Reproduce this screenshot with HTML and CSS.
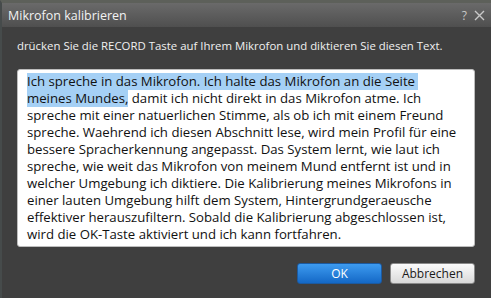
FILE: index.html
```html
<!DOCTYPE html>
<html lang="de">

<head>
    <meta charset="UTF-8" />
    <meta name="viewport" content="width=device-width, initial-scale=1.0" />
    <title>Mikrofon kalibrieren</title>
    <link rel="stylesheet" href="styles.css">
</head>

<body>
    <div class="window">
        <header class="titlebar">
            <span class="title">Mikrofon kalibrieren</span>
            <div class="title-controls">
                <span class="help">?</span>
                <svg class="close" width="11" height="11" viewBox="0 0 11 11">
                    <path d="M1 1 L10 10 M10 1 L1 10" stroke="#c8c8c8" stroke-width="1.4" fill="none" />
                </svg>
            </div>
        </header>
        <main class="content">
            <p class="prompt">drücken Sie die RECORD Taste auf Ihrem Mikrofon und diktieren Sie diesen Text.</p>
            <div class="textbox">
                <span class="line"><span class="selected">Ich spreche in das Mikrofon. Ich halte das Mikrofon an die Seite&nbsp;</span></span>
                <span class="line"><span class="selected">meines Mundes,</span> damit ich nicht direkt in das Mikrofon atme. Ich</span>
                <span class="line">spreche mit einer natuerlichen Stimme, als ob ich mit einem Freund</span>
                <span class="line">spreche. Waehrend ich diesen Abschnitt lese, wird mein Profil für eine</span>
                <span class="line">bessere Spracherkennung angepasst. Das System lernt, wie laut ich</span>
                <span class="line">spreche, wie weit das Mikrofon von meinem Mund entfernt ist und in</span>
                <span class="line">welcher Umgebung ich diktiere. Die Kalibrierung meines Mikrofons in</span>
                <span class="line">einer lauten Umgebung hilft dem System, Hintergrundgeraeusche</span>
                <span class="line">effektiver herauszufiltern. Sobald die Kalibrierung abgeschlossen ist,</span>
                <span class="line">wird die OK-Taste aktiviert und ich kann fortfahren.</span>
            </div>
            <div class="actions">
                <button class="btn btn-primary">OK</button>
                <button class="btn">Abbrechen</button>
            </div>
        </main>
    </div>
</body>

</html>
```

FILE: styles.css
```css
* {
    margin: 0;
    padding: 0;
    box-sizing: border-box;
    font-family: 'Open Sans', 'Noto Sans', sans-serif;
}

body {
    background: #3f3f3f;
    width: 491px;
    height: 298px;
    overflow: hidden;
}

.window {
    height: 298px;
    border-top: 3px solid #5d605a;
    border-left: 2px solid #464b4b;
    background: #3f3f3f;
}

.titlebar {
    display: flex;
    justify-content: space-between;
    align-items: center;
    height: 24px;
    padding: 0 6px 0 6px;
    background: linear-gradient(#6a6a6a, #4f4f4f);
    color: #f2f2f2;
}

.title {
    font-size: 12.5px;
}

.title-controls {
    display: flex;
    align-items: center;
    gap: 7px;
}

.help {
    font-size: 12px;
    color: #c8c8c8;
}

.content {
    padding: 11px 16px 0 15px;
}

.prompt {
    font-size: 11.4px;
    color: #f0f0f0;
    line-height: 16px;
}

.textbox {
    margin-top: 15px;
    height: 178px;
    background: #fff;
    border: 1px solid #bdbdbd;
    border-radius: 3px;
    padding: 3px 6px 0 9px;
}

.line {
    display: block;
    height: 17px;
    font-size: 13.2px;
    line-height: 17px;
    color: #111;
    white-space: nowrap;
}

.selected {
    display: inline-block;
    line-height: 17px;
    background: #a5d0f5;
}

.actions {
    display: flex;
    justify-content: flex-end;
    gap: 8px;
    margin-top: 16px;
}

.btn {
    width: 85px;
    height: 21px;
    font-size: 12px;
    border: 1px solid #8a8a8a;
    border-radius: 3px;
    background: linear-gradient(#fbfbfb, #d9d9d9);
    color: #1a1a1a;
}

.btn-primary {
    border-color: #1c5aa0;
    background: linear-gradient(#3d9bf0, #1468c6);
    color: #fff;
}
```
